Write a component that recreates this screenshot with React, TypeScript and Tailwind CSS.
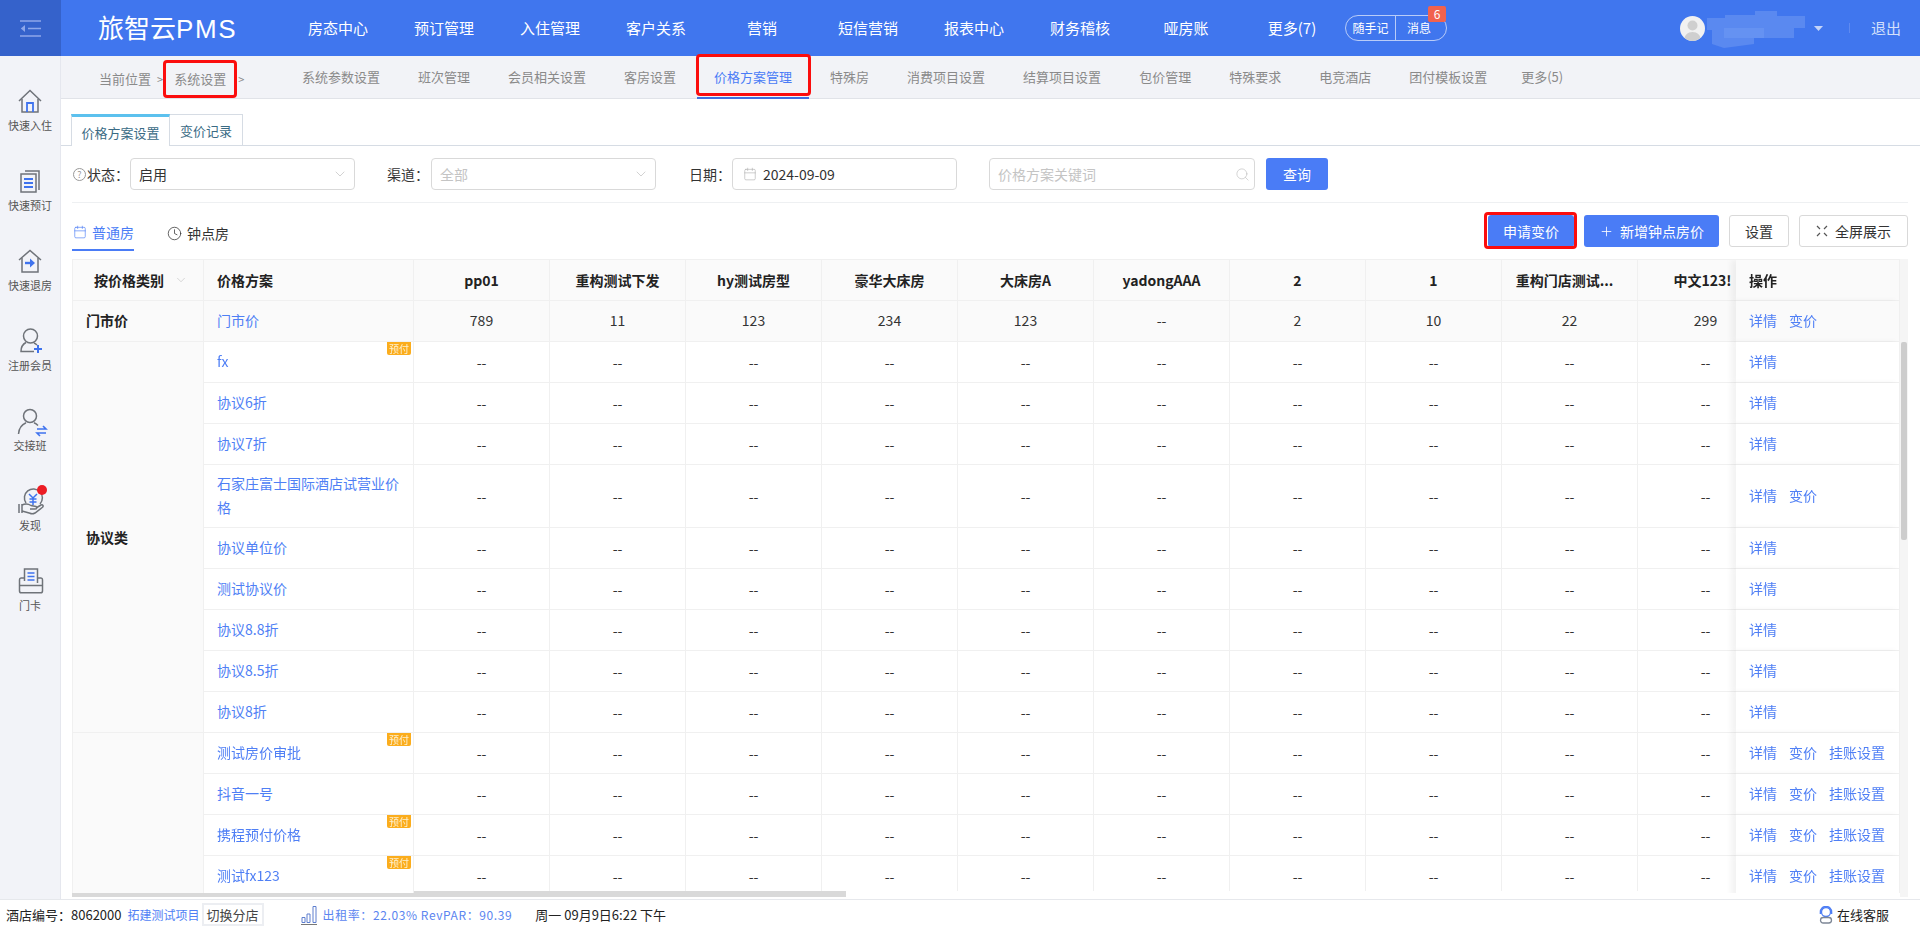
import React from "react";
import { Calendar, ChevronDown, Clock, Plus, Search } from "lucide-react";

const navItems = ["房态中心", "预订管理", "入住管理", "客户关系", "营销", "短信营销", "报表中心", "财务稽核", "哑房账", "更多(7)"];
const subItems = ["系统参数设置", "班次管理", "会员相关设置", "客房设置", "价格方案管理", "特殊房", "消费项目设置", "结算项目设置", "包价管理", "特殊要求", "电竞酒店", "团付模板设置"];
const columns = ["pp01", "重构测试下发", "hy测试房型", "豪华大床房", "大床房A", "yadongAAA", "2", "1", "重构门店测试...", "中文123!"];
const marketValues = ["789", "11", "123", "234", "123", "--", "2", "10", "22", "299"];

type Row = { name: string; badge?: boolean; ops: string[]; tall?: boolean };
const agreementRows: Row[] = [
  { name: "fx", badge: true, ops: ["详情"] },
  { name: "协议6折", ops: ["详情"] },
  { name: "协议7折", ops: ["详情"] },
  { name: "石家庄富士国际酒店试营业价格", ops: ["详情", "变价"], tall: true },
  { name: "协议单位价", ops: ["详情"] },
  { name: "测试协议价", ops: ["详情"] },
  { name: "协议8.8折", ops: ["详情"] },
  { name: "协议8.5折", ops: ["详情"] },
  { name: "协议8折", ops: ["详情"] },
];
const otherRows: Row[] = [
  { name: "测试房价审批", badge: true, ops: ["详情", "变价", "挂账设置"] },
  { name: "抖音一号", ops: ["详情", "变价", "挂账设置"] },
  { name: "携程预付价格", badge: true, ops: ["详情", "变价", "挂账设置"] },
  { name: "测试fx123", badge: true, ops: ["详情", "变价", "挂账设置"] },
];

const G = "#6f7379";
const B = "#3f73ee";

const HomeIcon = () => (
  <svg viewBox="0 0 26 26" className="h-[26px] w-[26px] overflow-visible" fill="none" strokeWidth="1.5" stroke={G}>
    <path d="M2 13 13 2.5 24 13" />
    <path d="M5 11v13h16V11" />
    <path d="M10 24v-9h6v9" stroke={B} strokeWidth="1.8" />
  </svg>
);
const BookIcon = () => (
  <svg viewBox="0 0 26 26" className="h-[26px] w-[26px] overflow-visible" fill="none" strokeWidth="1.5" stroke={G}>
    <path d="M8 3h14v19" />
    <rect x="4" y="6" width="15" height="18" />
    <path d="M7 11h9M7 15h9M7 19h9" stroke={B} strokeWidth="1.8" />
  </svg>
);
const CheckoutIcon = () => (
  <svg viewBox="0 0 26 26" className="h-[26px] w-[26px] overflow-visible" fill="none" strokeWidth="1.5" stroke={G}>
    <path d="M2 12 13 2.5 24 12" />
    <path d="M5 10v14h16V10" />
    <path d="M8 15h6" stroke={B} strokeWidth="2.4" />
    <path d="M13 10.5 18 15l-5 4.5z" fill={B} stroke="none" />
  </svg>
);
const UserPlusIcon = () => (
  <svg viewBox="0 0 26 26" className="h-[26px] w-[26px] overflow-visible" fill="none" strokeWidth="1.5" stroke={G}>
    <circle cx="13.5" cy="8" r="7" />
    <path d="M9 14.5C6 16 4 19 4 23.5h13" />
    <path d="M17 15c1 .4 2 1 3 2" />
    <path d="M21 17v8M17 21h8" stroke={B} strokeWidth="2" />
  </svg>
);
const UserSwapIcon = () => (
  <svg viewBox="0 0 26 26" className="h-[26px] w-[26px] overflow-visible" fill="none" strokeWidth="1.5" stroke={G}>
    <circle cx="13" cy="8" r="6.5" />
    <path d="M1.5 26C2 20 5 16.5 9 14.8" />
    <path d="M17 14.8c1.500.6 2.800 1.500 4 2.800" />
    <path d="M20 21h9l-3-3M29 25h-9l3 3" stroke={B} strokeWidth="1.6" />
  </svg>
);
const DiscoverIcon = () => (
  <svg viewBox="0 0 26 26" className="h-[26px] w-[26px] overflow-visible" fill="none" strokeWidth="1.5" stroke={G}>
    <path d="M9 15a9 9 0 1 1 14 1" />
    <path d="M12 6l4 4 4-4M16 10v7M12.500 11h7M12.500 14h7" stroke={B} strokeWidth="1.5" />
    <path d="M2 16v9M5 16v9" />
    <path d="M5 17c3-1.500 6-1.500 9 .5l5 1c1.500.5 1 2.500-1 2.500h-5M19 20l5-3c1.800-.8 2.800 1 1.500 2.300L18 25c-2 1-3.500 1-5 .3L5 23" />
  </svg>
);
const CardIcon = () => (
  <svg viewBox="0 0 26 26" className="h-[26px] w-[26px] overflow-visible" fill="none" strokeWidth="1.5" stroke={G}>
    <path d="M7.500 13V1h13v14" />
    <path d="M7.500 10H4c-1 0-1.500.8-1.500 1.800V23c0 1 .8 1.800 1.800 1.800h19.400c1 0 1.800-.8 1.800-1.800V11.800c0-1-.5-1.800-1.500-1.800h-3" />
    <path d="M2.500 17.500h23" />
    <path d="M10.500 5h7M10.500 8.500h7M10.500 12h7" stroke={B} strokeWidth="1.600" />
  </svg>
);

const sideItems: { label: string; icon: React.ReactNode; dot?: boolean }[] = [
  { label: "快速入住", icon: <HomeIcon /> },
  { label: "快速预订", icon: <BookIcon /> },
  { label: "快速退房", icon: <CheckoutIcon /> },
  { label: "注册会员", icon: <UserPlusIcon /> },
  { label: "交接班", icon: <UserSwapIcon /> },
  { label: "发现", icon: <DiscoverIcon />, dot: true },
  { label: "门卡", icon: <CardIcon /> },
];

function Badge() {
  return (
    <span className="absolute right-[2px] top-0 flex h-[13px] w-[24px] items-center justify-center rounded-b-[2px] bg-[#fbad1d] text-[10px] leading-[13px] text-[#fdf0d0]">
      预付
    </span>
  );
}

function Ops({ ops }: { ops: string[] }) {
  return (
    <div className="flex gap-3 text-[#4f7ff5]">
      {ops.map((o) => (
        <span key={o}>{o}</span>
      ))}
    </div>
  );
}

const cell = "border-r border-b border-[#f0f0f0]";
const stickyA = `sticky left-0 z-10 bg-[#fafafa] pl-[13px] text-left font-bold text-[#222] ${cell}`;
const stickyB = `sticky left-[131px] z-10 pl-[13px] pr-[13px] text-left ${cell}`;
const stickyOp = `sticky right-0 z-10 pl-[13px] text-left shadow-[-5px_0_6px_rgba(0,0,0,0.05)] ${cell}`;

function DataRow({ row, first, span }: { row: Row; first?: React.ReactNode; span?: number }) {
  const h = row.tall ? "h-[63px]" : "h-[41px]";
  return (
    <tr>
      {span ? (
        <td rowSpan={span} className={stickyA}>
          {first}
        </td>
      ) : null}
      <td className={`${stickyB} ${h} bg-white pb-[2px] leading-[24px] text-[#4f7ff5]`}>
        {row.name}
        {row.badge ? <Badge /> : null}
      </td>
      {columns.map((c) => (
        <td key={c} className={`${h} ${cell} bg-white text-center text-[#333]`}>
          --
        </td>
      ))}
      <td className={`${stickyOp} ${h} bg-white pb-[2px]`}>
        <Ops ops={row.ops} />
      </td>
    </tr>
  );
}

function headerPad(c: string) {
  if (c === "重构门店测试...") return "pr-[10px]";
  if (c === "中文123!") return "pr-[6px]";
  return "";
}

export default function App() {
  return (
    <div className="flex h-[929px] w-[1920px] flex-col overflow-hidden bg-white font-['Noto_Sans_CJK_SC',sans-serif] text-[14px] leading-[20px] text-[#333]">
      {/* top header */}
      <header className="flex h-14 shrink-0 items-center bg-[#4076ee] text-white">
        <div className="flex h-14 w-[61px] shrink-0 items-center justify-center bg-[#3562cb]">
          <svg viewBox="0 0 21 17" className="h-[17px] w-[21px]" fill="none" stroke="#8ea7ea" strokeWidth="1.6">
            <path d="M0 1h21M8 8.500h13M0 16h21" />
            <path d="M5 5 0.800 8.500 5 12z" fill="#8ea7ea" stroke="none" />
          </svg>
        </div>
        <div className="ml-[37px] w-[187px] shrink-0 text-[26px] leading-[32px]">
          旅智云<span className="font-['Liberation_Sans',sans-serif] tracking-[1.6px]">PMS</span>
        </div>
        <nav className="flex shrink-0">
          {navItems.map((n) => (
            <div key={n} className="w-[106px] text-center text-[15px]">
              {n}
            </div>
          ))}
        </nav>
        <div className="relative flex h-[26px] w-[102px] shrink-0 items-center rounded-[13px] border border-[#b9ccf8] text-[12px]">
          <span className="w-[50px] border-r border-[#b9ccf8] text-center leading-[24px]">随手记</span>
          <span className="flex-1 pr-[4px] text-center">消息</span>
          <span className="absolute left-[82px] top-[-10px] flex h-4 w-[18px] items-center justify-center rounded-[2px] bg-[#f1624e] text-[12px] leading-4">
            6
          </span>
        </div>
        <div className="ml-[233px] flex h-[25px] w-[25px] shrink-0 items-end justify-center overflow-hidden rounded-full bg-[#f1f1f1]">
          <svg viewBox="0 0 25 25" className="h-[25px] w-[25px]">
            <circle cx="12.500" cy="9.500" r="5" fill="#cfcfcf" />
            <path d="M4 25c0-6 4-9 8.500-9s8.500 3 8.500 9z" fill="#cfcfcf" />
          </svg>
        </div>
        <svg viewBox="0 0 110 40" className="ml-[-1px] h-[40px] w-[110px] shrink-0" fill="#5a89f0">
          <path d="M3 10h18V7h30V3h22v5h28v12H90v10H50v6l-30 4-12-4V22H3z" />
          <path d="M20 20h40v10H20z" fill="#6592f2" />
        </svg>
        <svg viewBox="0 0 9 5" className="h-[5px] w-[9px] shrink-0" fill="#c4d4f8">
          <path d="M0 0h9L4.500 5z" />
        </svg>
        <div className="ml-[26px] h-[10px] w-px shrink-0 bg-[#5f8af0]" />
        <div className="ml-[21px] text-[15px] text-[#d4e0fb]">退出</div>
      </header>

      <div className="flex min-h-0 flex-1">
        {/* sidebar */}
        <aside className="w-[61px] shrink-0 border-r border-[#e5e7ee] bg-[#f2f3f8] pt-[20px]">
          {sideItems.map((s) => (
            <div key={s.label} className="flex h-[80px] flex-col items-center pt-[12px] text-[11px] text-[#555]">
              <div className="relative h-[26px] w-[26px]">
                {s.icon}
                {s.dot ? <span className="absolute right-[-4px] top-[-3px] h-[10px] w-[10px] rounded-full bg-[#ec1c24]" /> : null}
              </div>
              <div className="mt-[4px] leading-[14px]">{s.label}</div>
            </div>
          ))}
        </aside>

        <main className="flex min-w-0 flex-1 flex-col">
          {/* sub navigation */}
          <div className="flex h-[43px] shrink-0 border-b border-[#e1e3e8] bg-[#f2f3f7] text-[13px] text-[#8a8a8a]">
            <div className="flex w-[222px] shrink-0 items-center pl-[38px] pt-[4px]">
              <span>当前位置</span>
              <span className="ml-[6px] text-[11px]">&gt;</span>
              <span className="relative ml-[11px]">
                系统设置
                <span className="absolute bottom-[-9px] left-[-11px] right-[-11px] top-[-9px] rounded-[4px] border-[3px] border-[#fb0d0d]" />
              </span>
              <span className="ml-[12px] text-[11px]">&gt;</span>
            </div>
            {subItems.map((s) => {
              const active = s === "价格方案管理";
              return (
                <div key={s} className={active ? "relative flex h-[42px] items-center px-[19px] text-[#4a7cf6]" : "flex h-[42px] items-center px-[19px]"}>
                  {s}
                  {active ? (
                    <>
                      <span className="absolute bottom-[-1px] left-[2px] right-[2px] h-[2px] bg-[#3f6fe0]" />
                      <span className="absolute bottom-[2px] left-[1px] right-0 top-[-2px] rounded-[4px] border-[3px] border-[#fb0d0d]" />
                    </>
                  ) : null}
                </div>
              );
            })}
            <div className="ml-[-4px] flex h-[42px] items-center px-[19px]">更多(5)</div>
          </div>

          {/* page tabs */}
          <div className="flex h-[47px] shrink-0 items-end border-b border-[#d6dce4] pl-[10px] text-[13px] text-[#3a6b85]">
            <div className="mb-[-1px] flex h-[32px] w-[99px] items-center justify-center border-x border-[#d6dce4] border-t-[3px] border-t-[#5cc1ee] bg-white pt-[2px]">价格方案设置</div>
            <div className="mb-[-1px] flex h-[32px] w-[73px] items-center justify-center border-r border-t border-[#d6dce4]">变价记录</div>
          </div>

          {/* filters */}
          <div className="mt-[12px] flex h-8 shrink-0 items-center pl-[12px] text-[#333]">
            <span className="flex h-[13px] w-[13px] items-center justify-center rounded-full border border-[#999] text-[9px] leading-none text-[#999]">?</span>
            <span className="ml-[1px] w-[43px]">状态：</span>
            <div className="flex h-8 w-[225px] items-center justify-between rounded-[4px] border border-[#d9d9d9] pl-[8px] pr-[6px]">
              <span>启用</span>
              <ChevronDown size={16} strokeWidth={1} className="text-[#bbb]" />
            </div>
            <span className="ml-[32px] w-[44px]">渠道：</span>
            <div className="flex h-8 w-[225px] items-center justify-between rounded-[4px] border border-[#d9d9d9] pl-[8px] pr-[6px] text-[#c4c4c4]">
              <span>全部</span>
              <ChevronDown size={16} strokeWidth={1} className="text-[#bbb]" />
            </div>
            <span className="ml-[33px] w-[43px]">日期：</span>
            <div className="flex h-8 w-[225px] items-center rounded-[4px] border border-[#d9d9d9] pl-[10px]">
              <Calendar size={14} strokeWidth={1} className="text-[#aaa]" />
              <span className="ml-[6px]">2024-09-09</span>
            </div>
            <div className="ml-[32px] flex h-8 w-[266px] items-center justify-between rounded-[4px] border border-[#d9d9d9] pl-[8px] pr-[4px] text-[#c4c4c4]">
              <span>价格方案关键词</span>
              <Search size={15} strokeWidth={1} className="text-[#bbb]" />
            </div>
            <div className="ml-[11px] flex h-8 w-[62px] items-center justify-center rounded-[3px] bg-[#4a7cf6] text-white">查询</div>
          </div>

          <div className="ml-[11px] mr-[12px] mt-[12px] h-px shrink-0 bg-[#eef0f2]" />

          {/* toolbar */}
          <div className="ml-[11px] mr-[12px] flex h-[56px] shrink-0 items-start justify-between">
            <div className="flex">
              <div className="flex h-[48px] w-[62px] items-center gap-[5px] whitespace-nowrap border-b-2 border-[#4a7cf6] pl-px pt-[12px] text-[#4a7cf6]">
                <Calendar size={14} strokeWidth={1.1} className="shrink-0" />
                <span>普通房</span>
              </div>
              <div className="ml-[33px] flex h-[48px] items-center gap-[5px] whitespace-nowrap pt-[12px] text-[#333]">
                <Clock size={15} strokeWidth={1.2} />
                <span>钟点房</span>
              </div>
            </div>
            <div className="mt-[12px] flex gap-[10px]">
              <div className="relative flex h-8 w-[86px] items-center justify-center rounded-[3px] bg-[#4a7cf6] text-white">
                申请变价
                <span className="absolute bottom-[-2px] left-[-4px] right-[-3px] top-[-3px] rounded-[4px] border-[3px] border-[#fb0d0d]" />
              </div>
              <div className="flex h-8 w-[135px] items-center justify-center gap-[6px] rounded-[3px] bg-[#4a7cf6] text-white">
                <Plus size={15} strokeWidth={1.3} />
                <span>新增钟点房价</span>
              </div>
              <div className="flex h-8 w-[60px] items-center justify-center rounded-[3px] border border-[#d9d9d9]">设置</div>
              <div className="flex h-8 w-[109px] items-center justify-center gap-[7px] rounded-[3px] border border-[#d9d9d9]">
                <svg viewBox="0 0 12 12" className="h-3 w-3" fill="none" stroke="#555" strokeWidth="1.200">
                  <path d="M1 1l3 3M11 1 8 4M1 11l3-3M11 11 8 8" />
                </svg>
                <span>全屏展示</span>
              </div>
            </div>
          </div>

          {/* table area */}
          <div className="ml-[11px] mr-[12px] flex h-[638px] shrink-0">
            <div className="min-w-0 flex-1">
              <div className="relative h-[634px] overflow-hidden border-l border-t border-[#f0f0f0]">
                <table className="w-[1865px] table-fixed border-separate border-spacing-0">
                  <colgroup>
                    <col className="w-[131px]" />
                    <col className="w-[210px]" />
                    {columns.map((c) => (
                      <col key={c} className="w-[136px]" />
                    ))}
                    <col className="w-[164px]" />
                  </colgroup>
                  <thead>
                    <tr className="font-bold text-[#222]">
                      <th className={`sticky left-0 z-10 h-[41px] bg-[#fafafa] pl-[21px] text-left ${cell}`}>
                        <span className="flex items-center">
                          按价格类别
                          <ChevronDown size={14} strokeWidth={1} className="ml-[10px] text-[#bbb]" />
                        </span>
                      </th>
                      <th className={`${stickyB} bg-[#fafafa]`}>价格方案</th>
                      {columns.map((c) => (
                        <th key={c} className={`${cell} ${headerPad(c)} bg-[#fafafa] text-center`}>
                          {c}
                        </th>
                      ))}
                      <th className={`${stickyOp} bg-[#fafafa]`}>操作</th>
                    </tr>
                  </thead>
                  <tbody>
                    <tr>
                      <td className={`${stickyA} h-[41px] pb-[2px]`}>门市价</td>
                      <td className={`${stickyB} bg-[#fafafa] pb-[2px] text-[#4f7ff5]`}>门市价</td>
                      {marketValues.map((v, i) => (
                        <td key={i} className={`${cell} bg-[#fafafa] pb-[2px] text-center text-[#333]`}>
                          {v}
                        </td>
                      ))}
                      <td className={`${stickyOp} bg-[#fafafa] pb-[2px]`}>
                        <Ops ops={["详情", "变价"]} />
                      </td>
                    </tr>
                    {agreementRows.map((r, i) => (
                      <DataRow key={r.name} row={r} first={i === 0 ? "协议类" : null} span={i === 0 ? agreementRows.length : undefined} />
                    ))}
                    {otherRows.map((r, i) => (
                      <DataRow key={r.name} row={r} first={null} span={i === 0 ? otherRows.length : undefined} />
                    ))}
                  </tbody>
                </table>
                {/* data columns stop 2px above the fixed ones */}
                <span className="absolute bottom-0 left-[341px] z-0 h-[2px] w-[432px] bg-[#d9d9d9]" />
                <span className="absolute bottom-0 left-[773px] right-[164px] z-0 h-[2px] bg-white" />
              </div>
              <div className="h-[4px]">
                <div className="h-[4px] w-[774px] bg-[#d9d9d9]" />
              </div>
            </div>
            <div className="w-[8px] shrink-0 bg-[#f5f5f5] pt-[83px]">
              <div className="ml-px h-[198px] w-[6px] rounded-[2px] bg-[#cdcdcd]" />
            </div>
          </div>
        </main>
      </div>

      {/* status bar */}
      <footer className="flex h-[30px] shrink-0 items-center border-t border-[#e6e8ec] bg-white pl-[6px] text-[13px] text-[#222]">
        <span>酒店编号：8062000</span>
        <span className="ml-[6px] text-[12px] text-[#4f7ff5]">拓建测试项目</span>
        <span className="ml-[2px] flex h-[23px] w-[62px] items-center justify-center border-2 border-[#eceef2] text-[#444]">切换分店</span>
        <svg viewBox="0 0 16 20" className="ml-[37px] h-[20px] w-[16px]" fill="none" stroke="#5e7fcf" strokeWidth="1">
          <path d="M1 12.500h3v5H1zM6 9h3v8.500H6zM12 1.500h3v16h-3z" />
          <path d="M0 19.500h16" stroke="#777" />
        </svg>
        <span className="ml-[6px] text-[12px] tracking-[0.6px] text-[#5b85f0]">出租率：22.03% RevPAR：90.39</span>
        <span className="ml-[23px]">周一 09月9日6:22 下午</span>
        <span className="ml-auto flex items-center gap-[4px] pr-[31px]">
          <svg viewBox="0 0 14 18" className="h-[18px] w-[14px]" fill="none" stroke="#7d8796" strokeWidth="1.300">
            <circle cx="7" cy="6" r="4.500" stroke="#4f7ff5" />
            <path d="M1.500 8V6a5.500 5.500 0 0 1 11 0v2" stroke="#4f7ff5" strokeWidth="1.600" />
            <rect x="1.500" y="11.500" width="11" height="5.500" rx="2.750" />
          </svg>
          在线客服
        </span>
      </footer>
    </div>
  );
}
